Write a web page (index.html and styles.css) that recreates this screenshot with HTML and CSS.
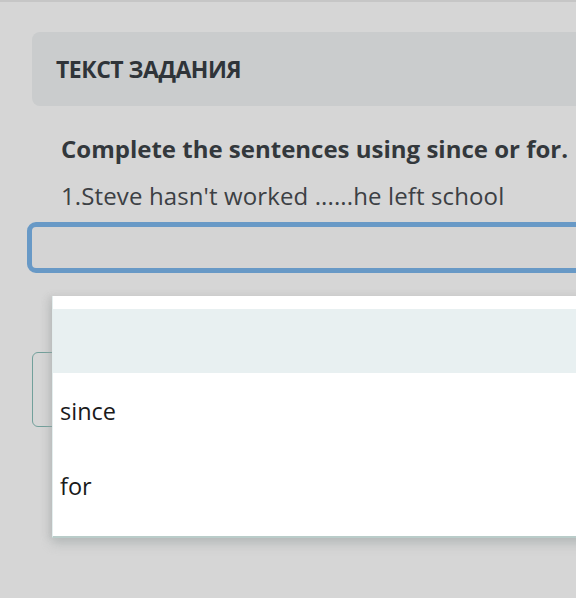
FILE: index.html
```html
<!DOCTYPE html>
<html lang="ru">
<head>
<meta charset="utf-8">
<link rel="stylesheet" href="styles.css">
</head>
<body>
<div class="page">
  <div class="task-header">ТЕКСТ ЗАДАНИЯ</div>
  <div class="content">
    <p class="instruction">Complete the sentences using since or for.</p>
    <p class="sentence">1.Steve hasn't worked ......he left school</p>
  </div>
  <div class="answer-input"></div>
  <div class="below">
    <div class="next-field"></div>
    <div class="dropdown">
      <div class="opt-gap"></div>
      <div class="opt opt-active"></div>
      <div class="opt">since</div>
      <div class="opt">for</div>
      <div class="opt-gap"></div>
    </div>
  </div>
</div>
</body>
</html>
```

FILE: styles.css
```css
html, body {
  margin: 0;
  padding: 0;
  background: #d6d6d6;
  overflow: hidden;
}
body {
  width: 576px;
  height: 598px;
  font-family: "Open Sans", "Noto Sans", sans-serif;
}
.page {
  border-top: 2px solid #c6c6c6;
  padding-top: 30px;
  width: 576px;
  overflow: hidden;
}
.task-header {
  margin-left: 32px;
  margin-right: -40px;
  height: 74px;
  box-sizing: border-box;
  background: #cacccd;
  border-radius: 8px 0 0 8px;
  padding-left: 24px;
  display: flex;
  align-items: center;
  font-weight: 700;
  font-size: 23px;
  color: #2f3439;
  letter-spacing: -0.5px;
}
.content {
  padding-left: 61px;
  white-space: nowrap;
}
.instruction {
  margin: 0;
  padding-top: 25px;
  font-weight: 700;
  font-size: 24px;
  line-height: 36px;
  color: #33383c;
}
.sentence {
  margin: 0;
  padding-top: 11px;
  font-size: 24px;
  line-height: 36px;
  color: #3c4044;
  font-weight: 400;
  letter-spacing: 0.12px;
}
.answer-input {
  margin-left: 27px;
  margin-right: -40px;
  margin-top: 8px;
  height: 51px;
  box-sizing: border-box;
  border: 5px solid #6899c6;
  border-radius: 9px;
  background: #d4d4d4;
}
.below {
  position: relative;
  height: 320px;
}
.next-field {
  position: absolute;
  left: 32px;
  top: 79px;
  width: 600px;
  height: 75px;
  box-sizing: border-box;
  border: 1.5px solid #72a09b;
  border-radius: 6px;
}
.dropdown {
  position: absolute;
  left: 52px;
  top: 23px;
  width: 600px;
  background: #ffffff;
  border-bottom: 2px solid #b9ccc9;
  border-left: 1px solid #e4eeee;
  box-shadow: 0 6px 10px rgba(150, 160, 160, 0.45), -4px 0 6px rgba(170, 170, 170, 0.3);
}
.opt-gap {
  height: 13px;
}
.opt {
  height: 75px;
  padding-left: 7px;
  display: flex;
  align-items: center;
  font-size: 23.5px;
  color: #1a1a1a;
}
.opt-active {
  height: 64px;
  background: #e8f0f1;
}
```
